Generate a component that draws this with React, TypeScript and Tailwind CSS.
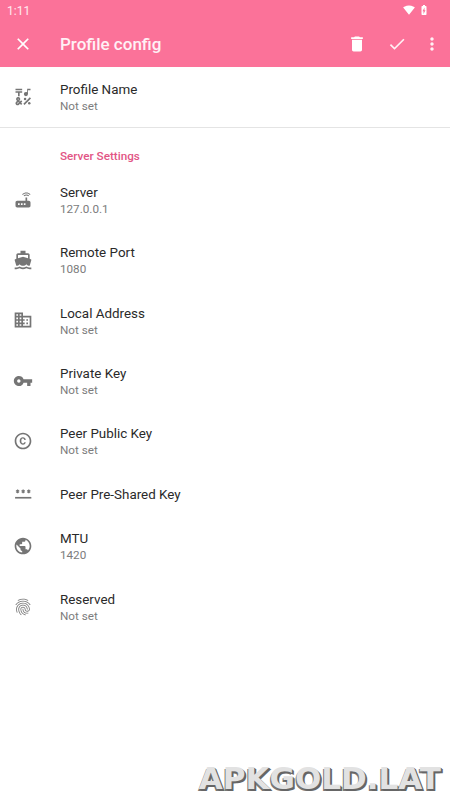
import type { ComponentType } from "react";
import {
  MdBatteryChargingFull,
  MdCheck,
  MdClose,
  MdCopyright,
  MdDelete,
  MdDirectionsBoat,
  MdDomain,
  MdEmojiSymbols,
  MdFingerprint,
  MdMoreVert,
  MdPublic,
  MdRouter,
  MdSignalWifi4Bar,
  MdVpnKey,
} from "react-icons/md";

type Setting = {
  icon: ComponentType<{ className?: string }>;
  title: string;
  summary?: string;
};

// three small asterisks over a line
const PasswordIcon = ({ className }: { className?: string }) => (
  <svg viewBox="0 0 24 24" className={className} stroke="currentColor" fill="none">
    <path d="M2.5 16.5h19.5" strokeWidth="2" />
    <path
      strokeWidth="1.5"
      d="M5.5 6.6v4.4M3.6 7.7l3.8 2.2M7.4 7.7l-3.8 2.2M12.2 6.6v4.4M10.3 7.7l3.8 2.2M14.1 7.7l-3.8 2.2M18.9 6.6v4.4M17 7.7l3.8 2.2M20.8 7.7l-3.8 2.2"
    />
  </svg>
);

const serverSettings: Setting[] = [
  { icon: MdRouter, title: "Server", summary: "127.0.0.1" },
  { icon: MdDirectionsBoat, title: "Remote Port", summary: "1080" },
  { icon: MdDomain, title: "Local Address", summary: "Not set" },
  { icon: MdVpnKey, title: "Private Key", summary: "Not set" },
  { icon: MdCopyright, title: "Peer Public Key", summary: "Not set" },
  { icon: PasswordIcon, title: "Peer Pre-Shared Key" },
  { icon: MdPublic, title: "MTU", summary: "1420" },
  { icon: MdFingerprint, title: "Reserved", summary: "Not set" },
];

const SettingRow = ({ icon: Icon, title, summary }: Setting) => (
  <div className={`flex items-center pl-[13.4px] ${summary ? "h-[60.4px]" : "h-[44.6px]"}`}>
    <Icon className="size-5 shrink-0 text-[#757575]" />
    <div className="ml-[26.6px] pt-[1.6px]">
      <div className="text-[13.4px] leading-[17px] text-[#2a2a2a]">{title}</div>
      {summary && <div className="text-[11.7px] leading-4 text-[#7c7c7c]">{summary}</div>}
    </div>
  </div>
);

const App = () => {
  return (
    <div className="flex h-[800px] w-[450px] flex-col overflow-hidden bg-white font-['Roboto',sans-serif]">
      <header className="h-[67px] shrink-0 bg-[#fb7299] text-white">
        <div className="flex h-5 items-center pl-[7px] pr-5">
          <span className="pt-px text-xs leading-5 text-white/85">1:11</span>
          <MdSignalWifi4Bar className="ml-auto size-3" />
          <MdBatteryChargingFull className="ml-[3px] size-3" />
        </div>
        <div className="flex h-[47px] items-center pl-[13.4px] pr-2">
          <MdClose className="size-5" />
          <h1 className="ml-[26.6px] pt-[3px] text-[17px] font-medium text-white/90">Profile config</h1>
          <MdDelete className="ml-auto size-5" />
          <MdCheck className="ml-5 size-5 text-white/90" />
          <MdMoreVert className="ml-[15px] size-5 text-white/90" />
        </div>
      </header>

      <div className="border-b border-[#e4e4e4]">
        <SettingRow icon={MdEmojiSymbols} title="Profile Name" summary="Not set" />
      </div>

      <h2 className="mt-5 h-[21px] pl-[60px] text-[11.7px] font-medium leading-[17px] text-[#e25585]">
        Server Settings
      </h2>
      {serverSettings.map((setting) => (
        <SettingRow key={setting.title} {...setting} />
      ))}

      <div className="mb-px mr-[9px] mt-auto self-end font-['DejaVu_Sans',sans-serif] text-[31px] font-bold leading-[42px] text-[#e2e2e2] [text-shadow:1px_1px_0_#666,2px_2px_0_#666,-1px_2px_0_#777]">
        APKGOLD.LAT
      </div>
    </div>
  );
};

export default App;
